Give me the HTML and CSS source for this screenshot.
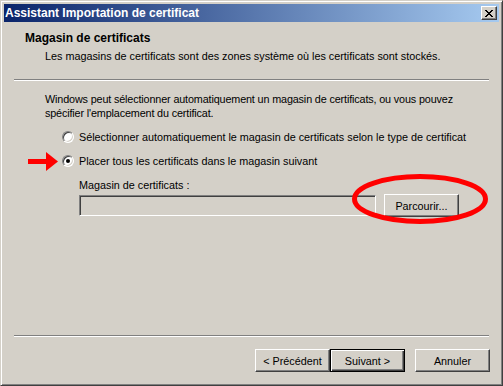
FILE: index.html
```html
<!DOCTYPE html>
<html lang="fr">
<head>
    <meta charset="UTF-8">
    <title>Assistant Importation de certificat</title>
    <link rel="stylesheet" href="styles.css">
</head>
<body>

<div class="window">
    <!-- barre de titre -->
    <div class="titlebar">
        <span class="title">Assistant Importation de certificat</span>
        <div class="close">
            <svg width="8" height="7" viewBox="0 0 8 7">
                <path d="M0 0h2v1h1v1h2v-1h1v-1h2v1h-1v1h-1v1h-1v1h1v1h1v1h1v1h-2v-1h-1v-1h-2v1h-1v1h-2v-1h1v-1h1v-1h1v-1h-1v-1h-1v-1h-1z" fill="#000"/>
            </svg>
        </div>
    </div>

    <div class="header">
        <h1>Magasin de certificats</h1>
        <p>Les magasins de certificats sont des zones système où les certificats sont stockés.</p>
    </div>

    <div class="sep"></div>

    <div class="content">
        <p class="intro">Windows peut sélectionner automatiquement un magasin de certificats, ou vous pouvez<br>spécifier l'emplacement du certificat.</p>

        <div class="options">
            <div class="option">
                <span class="radio"></span>
                <span>Sélectionner automatiquement le magasin de certificats selon le type de certificat</span>
            </div>
            <div class="option">
                <svg class="arrow" width="31" height="19" viewBox="0 0 31 19">
                    <rect x="0" y="7" width="20" height="5" fill="#ff0000"/>
                    <polygon points="18,0 30,9.5 18,19" fill="#ff0000"/>
                </svg>
                <span class="radio checked"></span>
                <span>Placer tous les certificats dans le magasin suivant</span>
            </div>
        </div>

        <div class="store">
            <div class="store-label">Magasin de certificats :</div>
            <div class="store-row">
                <div class="field"></div>
                <div class="btn">Parcourir...</div>
                <svg class="circle" width="146" height="60" viewBox="0 0 146 60">
                    <ellipse cx="73" cy="30" rx="65.5" ry="22.5" fill="none" stroke="#ff0000" stroke-width="5"/>
                </svg>
            </div>
        </div>
    </div>

    <div class="sep"></div>

    <div class="footer">
        <div class="btn">&lt; Précédent</div>
        <div class="btn default">Suivant &gt;</div>
        <div class="btn cancel">Annuler</div>
    </div>
</div>

</body>
</html>
```

FILE: styles.css
```css
body {
    margin: 0;
    background: #d4d0c8;
    font-family: "Liberation Sans", Arial, sans-serif;
    font-size: 10.8px;
    color: #000;
}

.window {
    width: 503px;
    height: 386px;
    box-sizing: border-box;
    display: flex;
    flex-direction: column;
    padding: 3px;
    border: 1px solid;
    border-color: #d4d0c8 #404040 #404040 #d4d0c8;
    box-shadow: inset 1px 1px #fff, inset -1px -1px #808080;
    background: #d4d0c8;
}

/* barre de titre */
.titlebar {
    height: 18px;
    display: flex;
    align-items: center;
    justify-content: space-between;
    padding: 0 2px 0 1px;
    background: linear-gradient(to right, #0a246a, #a6caf0);
}

.title {
    color: #fff;
    font-weight: bold;
    font-size: 12px;
}

.close {
    width: 16px;
    height: 14px;
    box-sizing: border-box;
    display: flex;
    align-items: center;
    justify-content: center;
    background: #d4d0c8;
    border: 1px solid;
    border-color: #fff #404040 #404040 #fff;
    box-shadow: inset -1px -1px #808080;
}

/* en-tête */
.header {
    padding: 10px 0 0 21px;
    height: 47px;
}

.header h1 {
    margin: 0;
    font-size: 12px;
    font-weight: bold;
    line-height: 13px;
}

.header p {
    margin: 5px 0 0 20px;
    line-height: 13px;
}

.sep {
    height: 0;
    margin: 0 10px;
    border-top: 1px solid #808080;
    border-bottom: 1px solid #fff;
}

/* contenu */
.content {
    flex: 1;
    padding: 11px 0 0 41px;
}

.intro {
    margin: 0;
    line-height: 14px;
    letter-spacing: -0.14px;
}

.options {
    margin-top: 9px;
    padding-left: 17px;
    display: flex;
    flex-direction: column;
    gap: 8px;
}

.option {
    position: relative;
    display: flex;
    align-items: center;
    gap: 5px;
    height: 16px;
}

.radio {
    width: 12px;
    height: 12px;
    box-sizing: border-box;
    border-radius: 50%;
    border: 1px solid;
    border-color: #808080 #fff #fff #808080;
    box-shadow: inset 1px 1px #404040, inset -1px -1px #d4d0c8;
    background: #fff;
    display: flex;
    align-items: center;
    justify-content: center;
}

.radio.checked::after {
    content: "";
    width: 4px;
    height: 4px;
    border-radius: 50%;
    background: #000;
}

.arrow {
    position: absolute;
    left: -34px;
    top: -1px;
}

.store {
    margin-top: 9px;
    padding-left: 34px;
}

.store-label {
    line-height: 14px;
}

.store-row {
    position: relative;
    margin-top: 2px;
    display: flex;
    align-items: center;
    gap: 8px;
}

.field {
    width: 297px;
    height: 21px;
    box-sizing: border-box;
    border: 1px solid;
    border-color: #808080 #fff #fff #808080;
    box-shadow: inset 1px 1px #404040, inset -1px -1px #d4d0c8;
    background: #d4d0c8;
}

.btn {
    width: 75px;
    height: 23px;
    box-sizing: border-box;
    display: flex;
    align-items: center;
    justify-content: center;
    border: 1px solid;
    border-color: #fff #404040 #404040 #fff;
    box-shadow: inset -1px -1px #808080;
    background: #d4d0c8;
}

.circle {
    position: absolute;
    left: 268px;
    top: -25px;
}

/* boutons du bas */
.footer {
    display: flex;
    justify-content: flex-end;
    padding: 12px 9px 10px 0;
}

.btn.default {
    border: 1px solid #000;
    box-shadow: inset 1px 1px #fff, inset -1px -1px #404040, inset -2px -2px #808080;
}

.btn.cancel {
    margin-left: 10px;
}
```
